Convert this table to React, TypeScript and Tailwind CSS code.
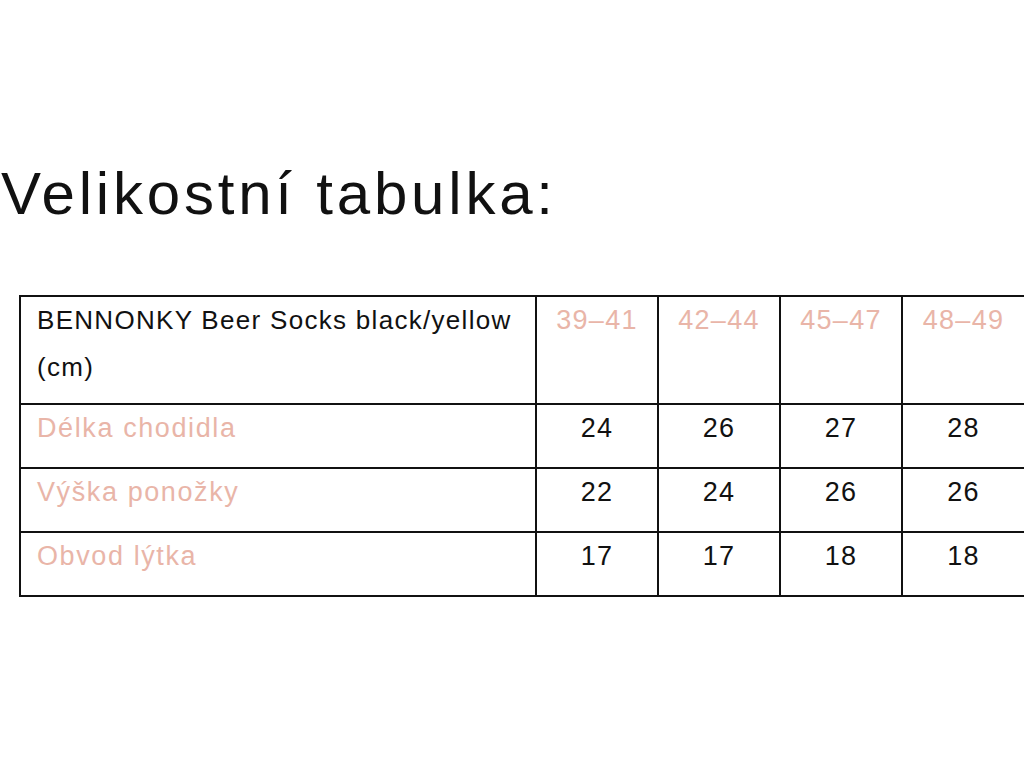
const sizes = ['39–41', '42–44', '45–47', '48–49'];

const rows = [
  { label: 'Délka chodidla', values: [24, 26, 27, 28] },
  { label: 'Výška ponožky', values: [22, 24, 26, 26] },
  { label: 'Obvod lýtka', values: [17, 17, 18, 18] },
];

export default function App() {
  return (
    <div className="min-h-[768px] w-[1024px] overflow-hidden bg-white text-[#111] font-['Liberation_Sans',Arial,sans-serif]">
      <h1 className="pt-[164px] pl-[1px] text-[60px] leading-[60px] font-normal tracking-[3.8px]">
        Velikostní tabulka:
      </h1>

      <table className="mt-[71px] ml-[19px] w-[1005px] table-fixed border-collapse text-[26px] tracking-[1.3px]">
        <colgroup>
          <col className="w-[516px]" />
          <col className="w-[122px]" />
          <col className="w-[122px]" />
          <col className="w-[122px]" />
          <col className="w-[123px]" />
        </colgroup>
        <thead>
          <tr className="h-[108px]">
            <th className="border-2 border-[#111] pl-[16px] pt-0 align-top text-left font-normal leading-[47px]">
              BENNONKY Beer Socks black/yellow
              <br />
              (cm)
            </th>
            {sizes.map((s) => (
              <th
                key={s}
                className="border-2 border-[#111] pt-0 align-top text-center font-normal leading-[47px] text-[27px] text-[#e9b5a8]"
              >
                {s}
              </th>
            ))}
          </tr>
        </thead>
        <tbody>
          {rows.map((row) => (
            <tr key={row.label} className="h-[64px]">
              <td className="border-2 border-[#111] pl-[16px] pt-0 align-top leading-[47px] text-[27px] tracking-[1.6px] text-[#e9b5a8]">
                {row.label}
              </td>
              {row.values.map((v, i) => (
                <td key={i} className="border-2 border-[#111] pt-0 align-top text-center leading-[47px] text-[27px]">
                  {v}
                </td>
              ))}
            </tr>
          ))}
        </tbody>
      </table>
    </div>
  );
}
